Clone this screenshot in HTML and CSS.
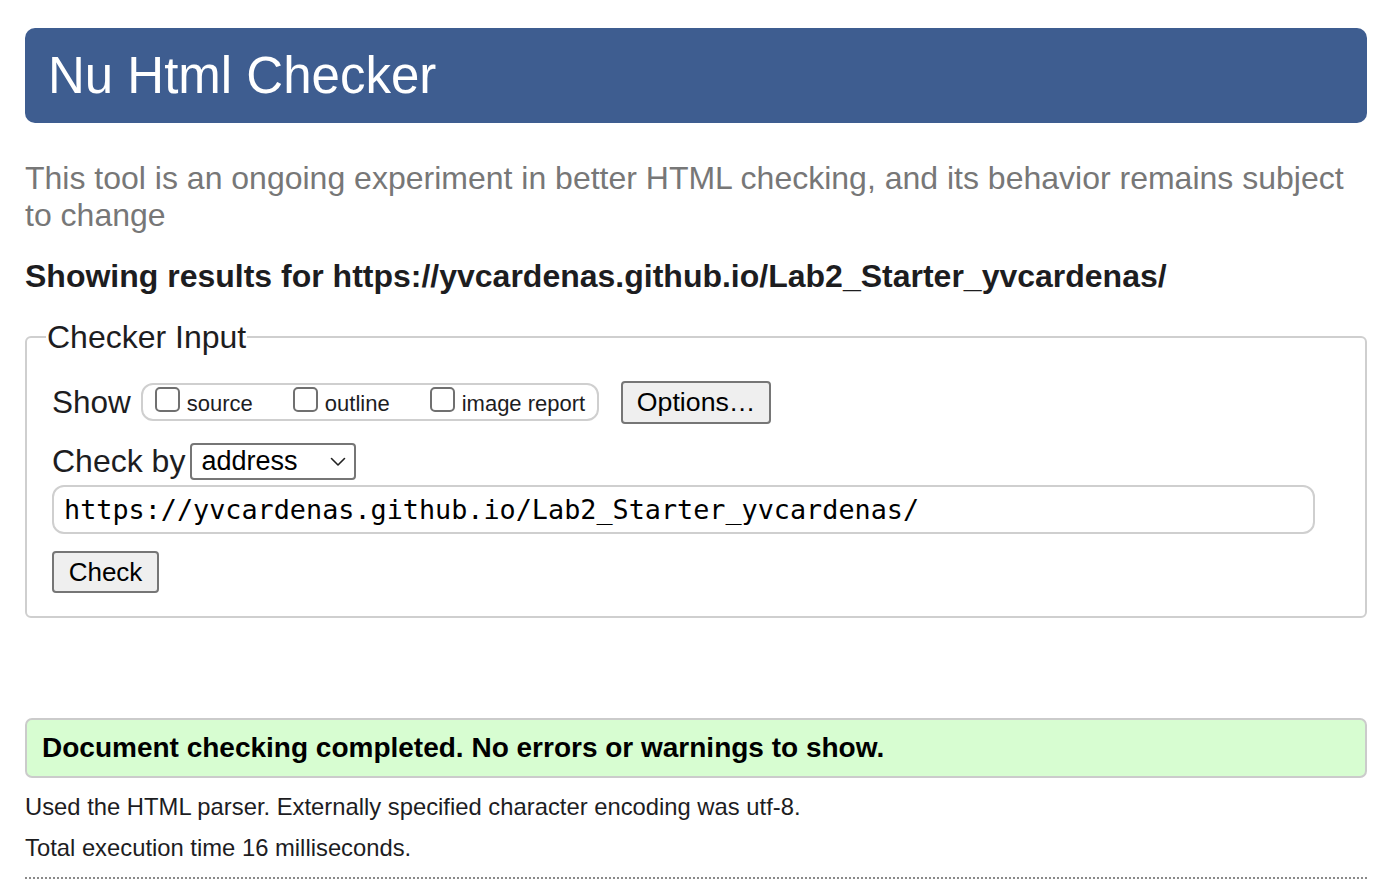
FILE: index.html
```html
<!DOCTYPE html>
<html lang="en">
<head>
<meta charset="utf-8">
<title>Nu Html Checker</title>
<link rel="stylesheet" href="styles.css">
</head>
<body>
<h1 class="title">Nu Html Checker</h1>
<p class="intro">This tool is an ongoing experiment in better HTML checking, and its behavior remains subject to change</p>
<p class="showing">Showing results for https://yvcardenas.github.io/Lab2_Starter_yvcardenas/</p>
<fieldset class="input-box">
  <legend class="legend">Checker Input</legend>
  <div class="row show-row">
    <span class="label">Show</span>
    <div class="opts">
      <label class="opt"><span class="cb"></span>source</label>
      <label class="opt"><span class="cb"></span>outline</label>
      <label class="opt"><span class="cb"></span>image report</label>
    </div>
    <button class="btn options-btn" type="button">Options…</button>
  </div>
  <div class="row check-row">
    <span class="label">Check by</span>
    <div class="select">
      <span>address</span>
      <svg class="chev" width="16" height="10" viewBox="0 0 16 10"><path d="M1.5 1.5 L8 8 L14.5 1.5" fill="none" stroke="#222" stroke-width="1.6" stroke-linecap="round" stroke-linejoin="round"/></svg>
    </div>
  </div>
  <div class="url">https://yvcardenas.github.io/Lab2_Starter_yvcardenas/</div>
  <button class="btn check-btn" type="button">Check</button>
</fieldset>
<div class="success">Document checking completed. No errors or warnings to show.</div>
<p class="meta">Used the HTML parser. Externally specified character encoding was utf-8.</p>
<p class="meta meta2">Total execution time 16 milliseconds.</p>
<hr class="dots">
</body>
</html>
```
FILE: styles.css
```css
html, body {
  margin: 0;
  padding: 0;
  background: #fff;
}
body {
  padding: 28px 19px 0 25px;
  font-family: "Liberation Sans", Arial, sans-serif;
  color: #1d1d1f;
}
.title {
  margin: 0;
  height: 95px;
  box-sizing: border-box;
  background: #3e5d90;
  color: #fff;
  border-radius: 10px;
  font-weight: normal;
  font-size: 51px;
  line-height: 95px;
  padding-left: 23px;
}
.intro {
  margin: 37px 0 0 0;
  color: #777;
  font-size: 32px;
  line-height: 37px;
}
.showing {
  margin: 22px 0 0 0;
  font-weight: bold;
  font-size: 32px;
  line-height: 40px;
  color: #1d1d1f;
}
.input-box {
  margin: 23px 0 0 0;
  border: 2px solid #cfcfcf;
  border-radius: 6px;
  padding: 0 0 23px 25px;
  box-sizing: border-box;
}
.legend {
  font-size: 32px;
  padding: 0 1px;
  margin-left: -6px;
  line-height: 36px;
}
.row {
  display: flex;
  align-items: center;
}
.label {
  font-size: 31.5px;
}
.check-row .label {
  font-size: 32px;
}
.show-row {
  margin-top: 25px;
  height: 44px;
}
.opts {
  display: flex;
  align-items: center;
  margin-left: 10px;
  height: 38px;
  border: 2px solid #cfcfcf;
  border-radius: 12px;
  box-sizing: border-box;
  padding: 0 12px 0 12px;
  gap: 40px;
  font-size: 22px;
}
.opt {
  display: flex;
  align-items: flex-end;
  height: 26px;
  line-height: 22px;
}
.cb {
  display: inline-block;
  width: 25px;
  height: 25px;
  border: 2px solid #707070;
  border-radius: 5px;
  box-sizing: border-box;
  margin-right: 7px;
  align-self: flex-start;
  margin-top: -2px;
}
.btn {
  font-family: "Liberation Sans", Arial, sans-serif;
  background: #efefef;
  border: 2px solid #767676;
  border-radius: 4px;
  color: #000;
  padding: 0;
}
.options-btn {
  margin-left: 22px;
  width: 150px;
  height: 43px;
  font-size: 26.7px;
}
.check-row {
  margin-top: 19px;
  height: 37px;
}
.select {
  margin-left: 5px;
  width: 166px;
  height: 37px;
  border: 2px solid #767676;
  border-radius: 4px;
  box-sizing: border-box;
  display: flex;
  align-items: center;
  justify-content: space-between;
  padding: 0 8px 0 9px;
  font-size: 27px;
  color: #000;
}
.chev {
  display: block;
}
.url {
  margin-top: 5px;
  width: 1263px;
  height: 49px;
  box-sizing: border-box;
  border: 2px solid #cfcfcf;
  border-radius: 12px;
  font-family: "DejaVu Sans Mono", monospace;
  font-size: 26.8px;
  line-height: 45px;
  padding-left: 10px;
  color: #000;
}
.check-btn {
  display: block;
  margin-top: 17px;
  width: 107px;
  height: 42px;
  font-size: 26px;
}
.success {
  margin-top: 100px;
  height: 60px;
  box-sizing: border-box;
  background: #d7fdd1;
  border: 2px solid #cbcbcb;
  border-radius: 7px;
  padding-left: 15px;
  font-weight: bold;
  font-size: 28px;
  line-height: 56px;
  color: #000;
}
.meta {
  margin: 16px 0 0 0;
  font-size: 23.8px;
  line-height: 26px;
}
.meta2 {
  margin-top: 15px;
}
.dots {
  margin: 16px 0 0 0;
  border: 0;
  border-top: 2px dotted #8a8a8a;
  height: 0;
}
```
